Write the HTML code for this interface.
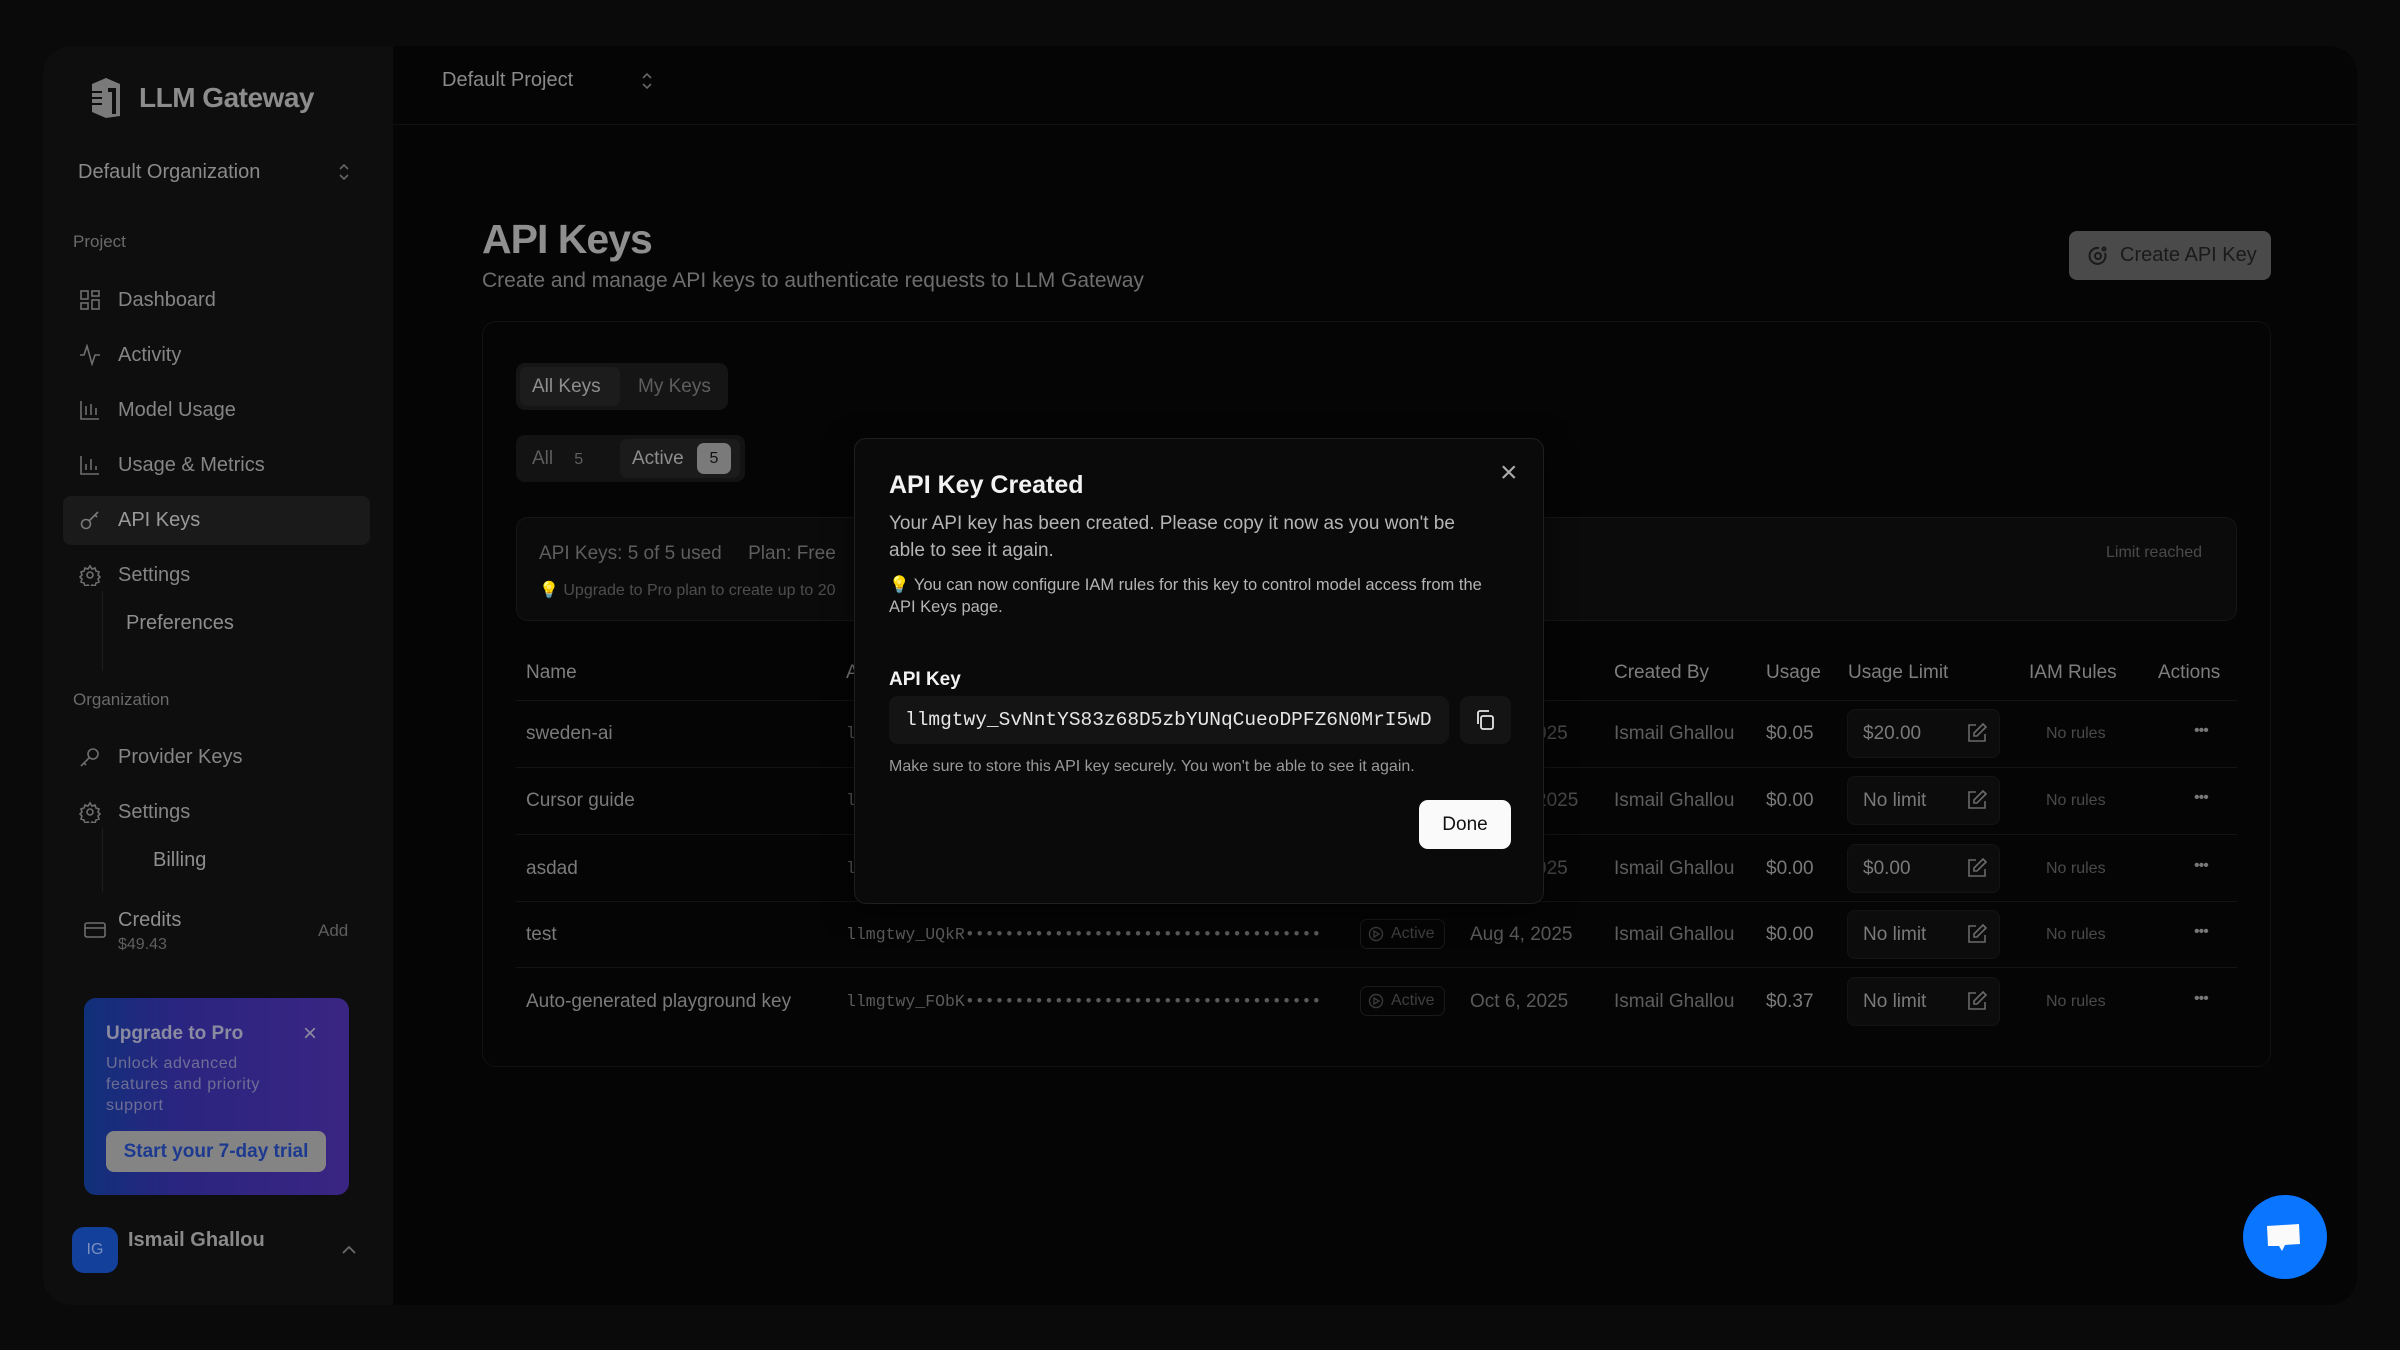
<!DOCTYPE html>
<html><head><meta charset="utf-8"><style>
*{box-sizing:border-box;margin:0;padding:0}
body{width:2400px;height:1350px;background:#0a0a0a;font-family:"Liberation Sans",sans-serif;position:relative;overflow:hidden;color:#8a8a8a}
.a{position:absolute;white-space:nowrap}
.frame{position:absolute;left:43px;top:46px;width:2314px;height:1259px;border-radius:28px;background:#050505;overflow:hidden}
.side{position:absolute;left:43px;top:46px;width:350px;height:1259px;background:#0e0e0e;border-radius:28px 0 0 28px}
.nav{font-size:20px;color:#858585}
.ic{position:absolute;width:22px;height:22px}
.mono{font-family:"Liberation Mono",monospace}
.th{font-size:19px;color:#7e7e7e}
.td{font-size:19px;color:#7a7a7a}
.lim{position:absolute;left:1847px;width:153px;height:49px;background:#0c0c0c;border:1px solid #141414;border-radius:8px}
.sep{position:absolute;left:516px;width:1721px;height:1px;background:#141414}
.badge{position:absolute;left:1360px;width:85px;height:30px;border:1px solid #1a1a1a;border-radius:7px;font-size:16px;color:#3f3f3f;padding:5px 0 0 30px}
</style></head><body>
<div class="frame"></div>
<div class="side"></div>
<div class="a" style="left:393px;top:124px;width:1964px;height:1px;background:#111"></div>

<svg class="a" style="left:84px;top:76px" width="44" height="44" viewBox="0 0 44 44"><path d="M8 8 L22 2 L36 8 L36 40 L22 42 L8 36 Z" fill="#7a7a7a"/><path d="M24 12 h8 v26 h-4 v-22 h-4z" fill="#0e0e0e"/><path d="M8 16h10M6 22h12M8 28h10" stroke="#0e0e0e" stroke-width="2"/></svg>
<div class="a" style="left:139px;top:82px;font-size:28px;font-weight:bold;color:#8c8c8c;letter-spacing:-0.5px">LLM Gateway</div>

<div class="a" style="left:442px;top:69px;font-size:20px;color:#8a8a8a">Default Project</div>
<svg class="a" style="left:640px;top:70px" width="14" height="22" viewBox="0 0 14 22" fill="none" stroke="#666" stroke-width="1.6"><path d="M3 8l4-4 4 4M3 14l4 4 4-4"/></svg>
<div class="a" style="left:78px;top:161px;font-size:20px;color:#8a8a8a">Default Organization</div>
<svg class="a" style="left:337px;top:161px" width="14" height="22" viewBox="0 0 14 22" fill="none" stroke="#666" stroke-width="1.6"><path d="M3 8l4-4 4 4M3 14l4 4 4-4"/></svg>

<div class="a" style="left:73px;top:232px;font-size:17px;color:#6a6a6a">Project</div>
<div class="a" style="left:63px;top:496px;width:307px;height:49px;background:#1a1a1a;border-radius:8px"></div>

<svg class="ic" style="left:79px;top:289px" viewBox="0 0 22 22" fill="none" stroke="#6e6e6e" stroke-width="1.6"><rect x="2" y="2" width="7" height="8"/><rect x="13" y="2" width="7" height="5"/><rect x="2" y="14" width="7" height="6"/><rect x="13" y="11" width="7" height="9"/></svg>
<div class="a nav" style="left:118px;top:289px">Dashboard</div>
<svg class="ic" style="left:79px;top:344px" viewBox="0 0 22 22" fill="none" stroke="#6e6e6e" stroke-width="1.6"><path d="M1 11h4l3-9 5 18 3-9h5"/></svg>
<div class="a nav" style="left:118px;top:344px">Activity</div>
<svg class="ic" style="left:79px;top:399px" viewBox="0 0 22 22" fill="none" stroke="#6e6e6e" stroke-width="1.6"><path d="M2 2v18h18M7 7v9M12 5v11M17 9v7"/></svg>
<div class="a nav" style="left:118px;top:399px">Model Usage</div>
<svg class="ic" style="left:79px;top:454px" viewBox="0 0 22 22" fill="none" stroke="#6e6e6e" stroke-width="1.6"><path d="M2 2v18h18M7 10v6M12 5v11M17 12v4"/></svg>
<div class="a nav" style="left:118px;top:454px">Usage &amp; Metrics</div>
<svg class="ic" style="left:79px;top:509px" viewBox="0 0 22 22" fill="none" stroke="#7a7a7a" stroke-width="1.6"><circle cx="7" cy="15" r="4.5"/><path d="M10 12l9-9M16 6l2 2"/></svg>
<div class="a nav" style="left:118px;top:509px;color:#9a9a9a">API Keys</div>
<svg class="ic" style="left:79px;top:564px" viewBox="0 0 22 22" fill="none" stroke="#6e6e6e" stroke-width="1.6"><circle cx="11" cy="11" r="3"/><path d="M11 2l2 3 3-1 1 3 3 1-1 3 2 2-2 2 1 3-3 1-1 3-3-1-2 3-2-3-3 1-1-3-3-1 1-3-2-2 2-2-1-3 3-1 1-3 3 1z"/></svg>
<div class="a nav" style="left:118px;top:564px">Settings</div>
<div class="a" style="left:102px;top:591px;width:1px;height:80px;background:#1e1e1e"></div>
<div class="a nav" style="left:126px;top:612px;color:#8e8e8e">Preferences</div>

<div class="a" style="left:73px;top:690px;font-size:17px;color:#6a6a6a">Organization</div>
<svg class="ic" style="left:79px;top:746px" viewBox="0 0 22 22" fill="none" stroke="#6e6e6e" stroke-width="1.6"><circle cx="14" cy="8" r="5"/><path d="M10 12l-8 8M5 17l2 2"/></svg>
<div class="a nav" style="left:118px;top:746px">Provider Keys</div>
<svg class="ic" style="left:79px;top:801px" viewBox="0 0 22 22" fill="none" stroke="#6e6e6e" stroke-width="1.6"><circle cx="11" cy="11" r="3"/><path d="M11 2l2 3 3-1 1 3 3 1-1 3 2 2-2 2 1 3-3 1-1 3-3-1-2 3-2-3-3 1-1-3-3-1 1-3-2-2 2-2-1-3 3-1 1-3 3 1z"/></svg>
<div class="a nav" style="left:118px;top:801px">Settings</div>
<div class="a" style="left:102px;top:828px;width:1px;height:64px;background:#1e1e1e"></div>
<div class="a nav" style="left:153px;top:849px;color:#8e8e8e">Billing</div>
<svg class="ic" style="left:84px;top:919px" viewBox="0 0 22 22" fill="none" stroke="#6e6e6e" stroke-width="1.6"><rect x="1" y="4" width="20" height="14" rx="2"/><path d="M1 9h20"/></svg>
<div class="a nav" style="left:118px;top:909px;color:#8e8e8e">Credits</div>
<div class="a" style="left:118px;top:936px;font-size:16px;color:#5e5e5e">$49.43</div>
<div class="a" style="left:318px;top:921px;font-size:17px;color:#5e5e5e">Add</div>

<div class="a" style="left:84px;top:998px;width:265px;height:197px;border-radius:12px;background:linear-gradient(90deg,#10307a 0%,#2a2580 35%,#3a2582 100%)"></div>
<div class="a" style="left:106px;top:1023px;font-size:19px;font-weight:bold;color:#8a8aa0">Upgrade to Pro</div>
<div class="a" style="left:303px;top:1020px;font-size:24px;color:#8a8aa0">×</div>
<div class="a" style="left:106px;top:1053px;font-size:16px;line-height:21px;letter-spacing:0.6px;color:#6f6f96;white-space:normal;width:180px">Unlock advanced features and priority support</div>
<div class="a" style="left:106px;top:1131px;width:220px;height:41px;background:#848484;border-radius:8px;font-size:19px;font-weight:bold;color:#1d3a90;text-align:center;line-height:41px">Start your 7-day trial</div>

<div class="a" style="left:72px;top:1227px;width:46px;height:46px;border-radius:12px;background:#13409a;color:#7a90c0;font-size:16px;text-align:center;line-height:46px">IG</div>
<div class="a" style="left:128px;top:1229px;font-size:20px;font-weight:bold;color:#8a8a8a">Ismail Ghallou</div>
<svg class="a" style="left:340px;top:1244px" width="18" height="12" viewBox="0 0 18 12" fill="none" stroke="#6a6a6a" stroke-width="1.8"><path d="M3 9l6-6 6 6"/></svg>

<div class="a" style="left:482px;top:216px;font-size:41px;font-weight:bold;color:#8f8f8f;letter-spacing:-1px">API Keys</div>
<div class="a" style="left:482px;top:269px;font-size:21px;color:#6e6e6e">Create and manage API keys to authenticate requests to LLM Gateway</div>
<div class="a" style="left:2069px;top:231px;width:202px;height:49px;background:#4a4a4a;border-radius:8px"></div>
<svg class="a" style="left:2087px;top:245px" width="22" height="22" viewBox="0 0 22 22" fill="none" stroke="#1a1a1a" stroke-width="2"><path d="M18 8a8 8 0 1 1-6-5"/><circle cx="11" cy="11" r="3"/><circle cx="17" cy="4" r="1.5"/></svg>
<div class="a" style="left:2120px;top:244px;font-size:20px;color:#1a1a1a">Create API Key</div>

<div class="a" style="left:482px;top:321px;width:1789px;height:746px;border:1px solid #121212;border-radius:14px"></div>
<div class="a" style="left:516px;top:363px;width:212px;height:47px;background:#151515;border-radius:9px"></div>
<div class="a" style="left:520px;top:367px;width:100px;height:39px;background:#1c1c1c;border-radius:7px"></div>
<div class="a" style="left:532px;top:376px;font-size:19px;color:#8e8e8e">All Keys</div>
<div class="a" style="left:638px;top:376px;font-size:19px;color:#5e5e5e">My Keys</div>
<div class="a" style="left:516px;top:435px;width:229px;height:47px;background:#131313;border-radius:9px"></div>
<div class="a" style="left:532px;top:448px;font-size:19px;color:#5e5e5e">All&nbsp;&nbsp;&nbsp;&nbsp;<span style="font-size:16px">5</span></div>
<div class="a" style="left:620px;top:439px;width:120px;height:39px;background:#1b1b1b;border-radius:7px"></div>
<div class="a" style="left:632px;top:448px;font-size:19px;color:#8e8e8e">Active</div>
<div class="a" style="left:697px;top:443px;width:34px;height:31px;background:#7a7a7a;border-radius:7px;font-size:16px;color:#111;text-align:center;line-height:31px">5</div>

<div class="a" style="left:516px;top:517px;width:1721px;height:104px;background:#0b0b0b;border:1px solid #161616;border-radius:12px"></div>
<div class="a" style="left:539px;top:543px;font-size:19px;color:#5e5e5e">API Keys: 5 of 5 used&nbsp;&nbsp;&nbsp;&nbsp;&nbsp;Plan: Free</div>
<div class="a" style="left:539px;top:580px;font-size:16px;color:#4e4e4e">💡 Upgrade to Pro plan to create up to 20</div>
<div class="a" style="left:2106px;top:544px;font-size:16px;color:#4a4a4a">Limit reached</div>

<div class="a th" style="left:526px;top:662px">Name</div>
<div class="a th" style="left:1614px;top:662px">Created By</div>
<div class="a th" style="left:1766px;top:662px">Usage</div>
<div class="a th" style="left:1848px;top:662px">Usage Limit</div>
<div class="a th" style="left:2029px;top:662px">IAM Rules</div>
<div class="a th" style="left:2158px;top:662px">Actions</div>
<div class="sep" style="top:700px"></div>
<div class="sep" style="top:767px"></div>
<div class="sep" style="top:834px"></div>
<div class="sep" style="top:901px"></div>
<div class="sep" style="top:967px"></div>

<div class="a td" style="left:526px;top:723px">sweden-ai</div>
<div class="a td" style="left:526px;top:790px">Cursor guide</div>
<div class="a td" style="left:526px;top:858px">asdad</div>
<div class="a td" style="left:526px;top:924px">test</div>
<div class="a td" style="left:526px;top:991px">Auto-generated playground key</div>

<div class="a td" style="left:1536px;top:723px;color:#4a4a4a">025</div>
<div class="a td" style="left:1536px;top:790px;color:#4a4a4a">2025</div>
<div class="a td" style="left:1536px;top:858px;color:#4a4a4a">025</div>

<div class="a mono" style="left:846px;top:925px;font-size:16.5px;color:#5a5a5a">llmgtwy_UQkR••••••••••••••••••••••••••••••••••••</div>
<div class="a mono" style="left:846px;top:992px;font-size:16.5px;color:#5a5a5a">llmgtwy_FObK••••••••••••••••••••••••••••••••••••</div>
<div class="badge" style="top:919px">Active</div>
<div class="badge" style="top:986px">Active</div>
<svg class="a" style="left:1368px;top:926px" width="16" height="16" viewBox="0 0 16 16" fill="none" stroke="#3a3a3a" stroke-width="1.4"><circle cx="8" cy="8" r="6.5"/><path d="M6 5l5 3-5 3z"/></svg>
<svg class="a" style="left:1368px;top:993px" width="16" height="16" viewBox="0 0 16 16" fill="none" stroke="#3a3a3a" stroke-width="1.4"><circle cx="8" cy="8" r="6.5"/><path d="M6 5l5 3-5 3z"/></svg>
<div class="a td" style="left:1470px;top:924px;color:#5a5a5a">Aug 4, 2025</div>
<div class="a td" style="left:1470px;top:991px;color:#5a5a5a">Oct 6, 2025</div>

<div class="a td" style="left:1614px;top:723px;color:#5e5e5e">Ismail Ghallou</div>
<div class="a td" style="left:1614px;top:790px;color:#5e5e5e">Ismail Ghallou</div>
<div class="a td" style="left:1614px;top:858px;color:#5e5e5e">Ismail Ghallou</div>
<div class="a td" style="left:1614px;top:924px;color:#5e5e5e">Ismail Ghallou</div>
<div class="a td" style="left:1614px;top:991px;color:#5e5e5e">Ismail Ghallou</div>
<div class="a td" style="left:1766px;top:723px">$0.05</div>
<div class="a td" style="left:1766px;top:790px">$0.00</div>
<div class="a td" style="left:1766px;top:858px">$0.00</div>
<div class="a td" style="left:1766px;top:924px">$0.00</div>
<div class="a td" style="left:1766px;top:991px">$0.37</div>

<div class="lim" style="top:709px"></div><div class="lim" style="top:776px"></div><div class="lim" style="top:844px"></div><div class="lim" style="top:910px"></div><div class="lim" style="top:977px"></div>
<div class="a td" style="left:1863px;top:723px">$20.00</div>
<div class="a td" style="left:1863px;top:790px">No limit</div>
<div class="a td" style="left:1863px;top:858px">$0.00</div>
<div class="a td" style="left:1863px;top:924px">No limit</div>
<div class="a td" style="left:1863px;top:991px">No limit</div>
<svg class="a" style="left:1966px;top:722px" width="22" height="22" viewBox="0 0 22 22" fill="none" stroke="#6a6a6a" stroke-width="1.6"><path d="M10 3H3v16h16v-7M17 2l3 3-9 9H8v-3z"/></svg>
<svg class="a" style="left:1966px;top:789px" width="22" height="22" viewBox="0 0 22 22" fill="none" stroke="#6a6a6a" stroke-width="1.6"><path d="M10 3H3v16h16v-7M17 2l3 3-9 9H8v-3z"/></svg>
<svg class="a" style="left:1966px;top:857px" width="22" height="22" viewBox="0 0 22 22" fill="none" stroke="#6a6a6a" stroke-width="1.6"><path d="M10 3H3v16h16v-7M17 2l3 3-9 9H8v-3z"/></svg>
<svg class="a" style="left:1966px;top:923px" width="22" height="22" viewBox="0 0 22 22" fill="none" stroke="#6a6a6a" stroke-width="1.6"><path d="M10 3H3v16h16v-7M17 2l3 3-9 9H8v-3z"/></svg>
<svg class="a" style="left:1966px;top:990px" width="22" height="22" viewBox="0 0 22 22" fill="none" stroke="#6a6a6a" stroke-width="1.6"><path d="M10 3H3v16h16v-7M17 2l3 3-9 9H8v-3z"/></svg>

<div class="a" style="left:2046px;top:725px;font-size:16px;color:#4a4a4a">No rules</div>
<div class="a" style="left:2046px;top:792px;font-size:16px;color:#4a4a4a">No rules</div>
<div class="a" style="left:2046px;top:860px;font-size:16px;color:#4a4a4a">No rules</div>
<div class="a" style="left:2046px;top:926px;font-size:16px;color:#4a4a4a">No rules</div>
<div class="a" style="left:2046px;top:993px;font-size:16px;color:#4a4a4a">No rules</div>
<div class="a" style="left:2194px;top:722px;font-size:16px;color:#777;letter-spacing:-1px">•••</div>
<div class="a" style="left:2194px;top:789px;font-size:16px;color:#777;letter-spacing:-1px">•••</div>
<div class="a" style="left:2194px;top:857px;font-size:16px;color:#777;letter-spacing:-1px">•••</div>
<div class="a" style="left:2194px;top:923px;font-size:16px;color:#777;letter-spacing:-1px">•••</div>
<div class="a" style="left:2194px;top:990px;font-size:16px;color:#777;letter-spacing:-1px">•••</div>
<div class="a mono" style="left:846px;top:724px;font-size:16.5px;color:#5a5a5a">l</div>
<div class="a mono" style="left:846px;top:791px;font-size:16.5px;color:#5a5a5a">l</div>
<div class="a mono" style="left:846px;top:859px;font-size:16.5px;color:#5a5a5a">l</div>
<div class="a" style="left:846px;top:662px;font-size:19px;color:#7e7e7e">A</div>

<div class="a" style="left:854px;top:438px;width:690px;height:466px;background:#0a0a0a;border:1px solid #1f1f1f;border-radius:12px;box-shadow:0 8px 30px rgba(0,0,0,.6)"></div>
<div class="a" style="left:1500px;top:456px;font-size:30px;color:#aaa;font-weight:300">×</div>
<div class="a" style="left:889px;top:471px;font-size:25px;font-weight:bold;color:#f2f2f2">API Key Created</div>
<div class="a" style="left:889px;top:510px;font-size:19px;line-height:27px;color:#b5b5b5;white-space:normal;width:592px">Your API key has been created. Please copy it now as you won't be able to see it again.</div>
<div class="a" style="left:889px;top:574px;font-size:16.5px;line-height:22px;color:#b5b5b5;white-space:normal;width:605px">💡 You can now configure IAM rules for this key to control model access from the API Keys page.</div>
<div class="a" style="left:889px;top:669px;font-size:19px;font-weight:bold;color:#f2f2f2">API Key</div>
<div class="a" style="left:889px;top:696px;width:560px;height:48px;background:#141414;border-radius:9px;overflow:hidden"><div class="mono" style="padding:0 0 0 16px;line-height:48px;font-size:19.5px;color:#e6e6e6;white-space:nowrap;width:544px;overflow:hidden">llmgtwy_SvNntYS83z68D5zbYUNqCueoDPFZ6N0MrI5wDE</div></div>
<div class="a" style="left:1460px;top:696px;width:51px;height:48px;background:#141414;border-radius:9px"></div>
<svg class="a" style="left:1474px;top:709px" width="22" height="22" viewBox="0 0 22 22" fill="none" stroke="#e6e6e6" stroke-width="1.8"><rect x="7" y="7" width="12" height="13" rx="2"/><path d="M4 15V4a2 2 0 0 1 2-2h9"/></svg>
<div class="a" style="left:889px;top:758px;font-size:16px;color:#9a9a9a">Make sure to store this API key securely. You won't be able to see it again.</div>
<div class="a" style="left:1419px;top:800px;width:92px;height:49px;background:#fafafa;border-radius:9px;font-size:19px;color:#111;text-align:center;line-height:49px">Done</div>

<div class="a" style="left:2243px;top:1195px;width:84px;height:84px;border-radius:50%;background:#0a76ff"></div>
<svg class="a" style="left:2263px;top:1218px" width="44" height="40" viewBox="0 0 44 40"><path d="M4 8 L36 6 L37 26 L22 27 L19 33 L16 28 L5 28 Z" fill="#fafafa"/></svg>
</body></html>
